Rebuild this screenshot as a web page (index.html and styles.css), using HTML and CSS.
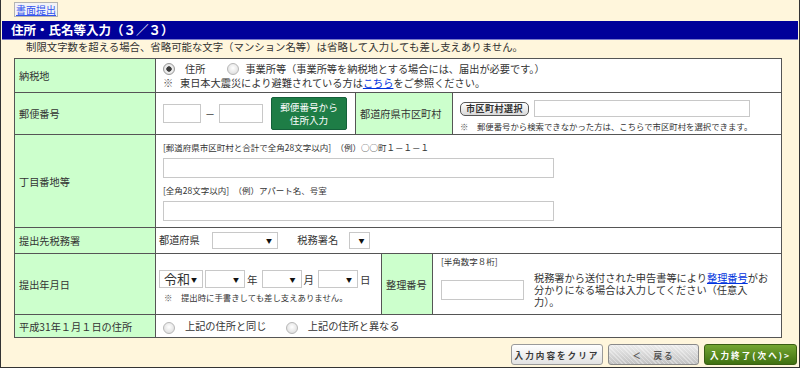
FILE: index.html
```html
<!DOCTYPE html>
<html lang="ja">
<head>
  <meta charset="utf-8">
  <title>住所・氏名等入力</title>
  <link rel="stylesheet" href="styles.css">
</head>
<body>
  <div class="page">
    <div class="top-links">
      <a href="#" class="paper-link">書面提出</a>
    </div>

    <h1 class="page-title">住所・氏名等入力（３／３）</h1>
    <p class="lead">制限文字数を超える場合、省略可能な文字（マンション名等）は省略して入力しても差し支えありません。</p>

    <table class="entry">
      <colgroup>
        <col class="col-label">
        <col class="col-zip">
        <col class="col-gap">
        <col class="col-ref">
        <col class="col-gap2">
        <col class="col-rest">
      </colgroup>

      <!-- 納税地 -->
      <tr class="row-tax">
        <th>納税地</th>
        <td colspan="5" class="cell-tax">
          <div class="line">
            <span class="radio checked"></span><span class="opt">住所</span>
            <span class="radio"></span><span class="opt">事業所等（事業所等を納税地とする場合には、届出が必要です。）</span>
          </div>
          <div class="line">
            <span class="mark">※</span>東日本大震災により避難されている方は<a href="#" class="link">こちら</a>をご参照ください。
          </div>
        </td>
      </tr>

      <!-- 郵便番号 / 都道府県市区町村 -->
      <tr class="row-zip">
        <th>郵便番号</th>
        <td class="cell-zip">
          <div class="zip-line">
            <span class="field zip1"></span>
            <span class="dash">－</span>
            <span class="field zip2"></span>
            <button type="button" class="zip-btn">郵便番号から<br>住所入力</button>
          </div>
        </td>
        <th colspan="3">都道府県市区町村</th>
        <td class="cell-city">
          <div class="city-line">
            <button type="button" class="city-btn">市区町村選択</button>
            <span class="field city"></span>
          </div>
          <div class="note"><span class="mark">※</span>郵便番号から検索できなかった方は、こちらで市区町村を選択できます。</div>
        </td>
      </tr>

      <!-- 丁目番地等 -->
      <tr class="row-addr">
        <th>丁目番地等</th>
        <td colspan="5" class="cell-addr">
          <div class="hint">[郵道府県市区町村と合計で全角28文字以内]　（例）○○町１－１－１</div>
          <span class="field addr"></span>
          <div class="hint">[全角28文字以内]　（例）アパート名、号室</div>
          <span class="field addr"></span>
        </td>
      </tr>

      <!-- 提出先税務署 -->
      <tr class="row-office">
        <th>提出先税務署</th>
        <td colspan="5" class="cell-office">
          <span>都道府県</span>
          <span class="select pref"><span class="arrow">▼</span></span>
          <span class="office-name">税務署名</span>
          <span class="select office"><span class="arrow">▼</span></span>
        </td>
      </tr>

      <!-- 提出年月日 / 整理番号 -->
      <tr class="row-date">
        <th>提出年月日</th>
        <td colspan="2" class="cell-date">
          <div class="date-line">
            <span class="select era"><span class="era-text">令和</span><span class="arrow">▼</span></span>
            <span class="select ymd"><span class="arrow">▼</span></span>
            <span class="unit">年</span>
            <span class="select ymd"><span class="arrow">▼</span></span>
            <span class="unit">月</span>
            <span class="select ymd"><span class="arrow">▼</span></span>
            <span class="unit">日</span>
          </div>
          <div class="note"><span class="mark">※</span>提出時に手書きしても差し支えありません。</div>
        </td>
        <th>整理番号</th>
        <td colspan="2" class="cell-ref">
          <div class="hint">[半角数字８桁]</div>
          <div class="ref-line">
            <span class="field ref"></span>
            <p class="ref-text">税務署から送付された申告書等により<a href="#" class="link">整理番号</a>がお分かりになる場合は入力してください（任意入力）。</p>
          </div>
        </td>
      </tr>

      <!-- 平成31年1月1日の住所 -->
      <tr class="row-prev">
        <th>平成31年１月１日の住所</th>
        <td colspan="5" class="cell-prev">
          <span class="radio"></span><span class="opt">上記の住所と同じ</span>
          <span class="radio"></span><span class="opt">上記の住所と異なる</span>
        </td>
      </tr>
    </table>

    <div class="actions">
      <button type="button" class="btn-clear">入力内容をクリア</button>
      <button type="button" class="btn-back">＜　戻る</button>
      <button type="button" class="btn-next">入力終了(次へ)&gt;</button>
    </div>
  </div>
</body>
</html>
```

FILE: styles.css
```css
body {
  margin: 0;
  font-family: "Noto Sans CJK JP", "Noto Sans", sans-serif;
  color: #333333;
  background-color: #ffffff;
}

.page {
  width: 800px;
  height: 368px;
  box-sizing: border-box;
  background-color: #fff6dc;
  border: 1px solid #333333;
  border-top: none;
  padding-top: 2px;
}

/* top link */
.top-links {
  display: flex;
  height: 15px;
  padding-left: 13px;
}

.paper-link {
  display: block;
  height: 15px;
  box-sizing: border-box;
  padding: 0 1px;
  border: 1px solid #b4b4b4;
  background-color: #f3f3f7;
  color: #3355ee;
  font-size: 10px;
  line-height: 13px;
  text-decoration: underline;
}

.page-title {
  margin: 4px 1px 0;
  height: 18px;
  padding-left: 9px;
  background-color: #000099;
  border-bottom: 1px solid #7a7ac8;
  color: #ffffff;
  font-size: 12.5px;
  font-weight: bold;
  line-height: 18px;
}

.lead {
  margin: 0 0 4px;
  padding-left: 25px;
  height: 14px;
  font-size: 10.4px;
  line-height: 14px;
}

/* table */
.entry {
  margin-left: 13px;
  width: 767px;
  border-collapse: collapse;
  table-layout: fixed;
  background-color: #ffffff;
  font-size: 10.2px;
}

.col-label { width: 141px; }
.col-zip { width: 200px; }
.col-gap { width: 26px; }
.col-ref { width: 51px; }
.col-gap2 { width: 20px; }
.col-rest { width: 329px; }

.entry th,
.entry td {
  border: 1px solid #555555;
  padding: 0;
}

.entry th {
  background-color: #ccffcc;
  font-weight: normal;
  text-align: left;
  padding-left: 4px;
  white-space: nowrap;
}

.row-tax { height: 34px; }
.row-zip { height: 42px; }
.row-addr { height: 93px; }
.row-office { height: 26px; }
.row-date { height: 61px; }
.row-prev { height: 23px; }

.line {
  display: flex;
  align-items: center;
  height: 14px;
  line-height: 14px;
}

.cell-tax {
  padding-left: 7px !important;
}

.radio {
  display: inline-block;
  width: 12px;
  height: 12px;
  box-sizing: border-box;
  border: 1px solid #b8b8b8;
  border-radius: 50%;
  background: radial-gradient(circle at 50% 40%, #ffffff, #d6d6d6);
  vertical-align: middle;
  flex: none;
}

.radio.checked {
  border-color: #9a9a9a;
  background: radial-gradient(circle, #3c3c3c 0 2.4px, #f2f2f2 3px, #d2d2d2);
}

.opt {
  margin-left: 10px;
  margin-right: 22px;
}

.cell-tax .opt + .radio + .opt {
  margin-left: 6px;
}

.mark {
  display: inline-block;
  width: 17px;
  color: #555555;
}

.link {
  color: #0033dd;
  text-decoration: underline;
}

.field {
  display: inline-block;
  box-sizing: border-box;
  border: 1px solid #c8c8c8;
  background-color: #ffffff;
  vertical-align: middle;
}

/* zip */
.cell-zip {
  padding-left: 7px !important;
}

.zip-line {
  display: flex;
  align-items: center;
}

.zip1 { width: 38px; height: 19px; }
.zip2 { width: 44px; height: 19px; }

.dash {
  width: 18px;
  text-align: center;
  font-size: 10px;
}

.zip-btn {
  margin-left: 8px;
  width: 76px;
  height: 33px;
  padding: 0;
  border: 1px solid #14603a;
  border-radius: 2px;
  background-color: #1e7d46;
  color: #ffffff;
  font-family: inherit;
  font-size: 9.6px;
  line-height: 13px;
}

.cell-city {
  vertical-align: top;
  padding: 7px 0 0 7px !important;
}

.city-line {
  display: flex;
  align-items: center;
  gap: 5px;
}

.city-btn {
  width: 69px;
  height: 14px;
  padding: 0;
  border: 1px solid #555555;
  border-radius: 5px;
  background: linear-gradient(#ffffff, #d8d8d8);
  color: #333333;
  font-family: inherit;
  font-size: 9px;
  font-weight: bold;
  line-height: 12px;
  letter-spacing: 0.5px;
}

.city {
  width: 216px;
  height: 17px;
}

.note {
  margin-top: 4px;
  font-size: 8.4px;
  line-height: 11px;
  white-space: nowrap;
}

.note .mark {
  width: 17px;
}

/* address */
.cell-addr {
  vertical-align: top;
  padding: 6px 0 0 7px !important;
}

.hint {
  height: 12px;
  font-size: 8.5px;
  line-height: 12px;
  white-space: nowrap;
}

.addr {
  display: block;
  width: 391px;
  height: 20px;
  margin: 5px 0 6px;
}

/* office */
.cell-office {
  padding-left: 3px !important;
  white-space: nowrap;
}

.select {
  display: inline-flex;
  align-items: center;
  justify-content: flex-end;
  box-sizing: border-box;
  height: 17px;
  padding-right: 5px;
  border: 1px solid #c8c8c8;
  background-color: #ffffff;
  vertical-align: middle;
}

.arrow {
  font-size: 6px;
  color: #111111;
}

.pref {
  width: 66px;
  margin-left: 10px;
}

.office-name {
  margin-left: 17px;
}

.office {
  width: 21px;
  margin-left: 9px;
}

/* date */
.cell-date {
  vertical-align: top;
  padding: 16px 0 0 3px !important;
}

.date-line {
  display: flex;
  align-items: center;
  height: 18px;
}

.date-line .select {
  height: 18px;
}

.era {
  width: 44px;
  justify-content: space-between;
  padding-left: 4px;
}

.era-text {
  font-size: 13px;
  line-height: 16px;
}

.ymd {
  width: 40px;
  margin-left: 2px;
}

.unit {
  margin: 0 2px 0 2px;
  font-size: 10.5px;
}

.cell-date .note {
  margin: 4px 0 0 5px;
}

/* reference number */
.cell-ref {
  vertical-align: top;
  padding: 1px 0 0 8px !important;
}

.ref-line {
  display: flex;
  align-items: center;
  gap: 10px;
  margin-top: 5px;
}

.ref {
  width: 83px;
  height: 20px;
  flex: none;
}

.ref-text {
  margin: 0;
  width: 238px;
  font-size: 10.2px;
  line-height: 12px;
}

/* previous address */
.cell-prev {
  padding-left: 7px !important;
  white-space: nowrap;
}

.cell-prev .opt {
  margin-right: 17px;
}

/* buttons */
.actions {
  display: flex;
  justify-content: flex-end;
  margin: 6px 2px 0 0;
}

.actions button {
  height: 21px;
  padding: 0;
  font-family: inherit;
  font-size: 8.6px;
  font-weight: bold;
  letter-spacing: 2px;
  border-radius: 3px;
  cursor: pointer;
}

.btn-clear {
  width: 92px;
  border: 1px solid #9a9a9a;
  background: linear-gradient(#ffffff, #e2e2e2);
  color: #3a3a3a;
}

.btn-back {
  width: 91px;
  margin-left: 5px;
  border: 1px solid #8a8a8a;
  background:
    repeating-linear-gradient(45deg, rgba(255, 255, 255, 0.35) 0 1px, transparent 1px 3px),
    linear-gradient(#ececec, #c2c2c2);
  color: #555555;
  font-size: 10px;
}

.btn-next {
  width: 93px;
  margin-left: 5px;
  border: 1px solid #3a5e12;
  background: linear-gradient(#74a632, #3f7010);
  color: #ffffff;
  letter-spacing: 1.5px;
}
```
